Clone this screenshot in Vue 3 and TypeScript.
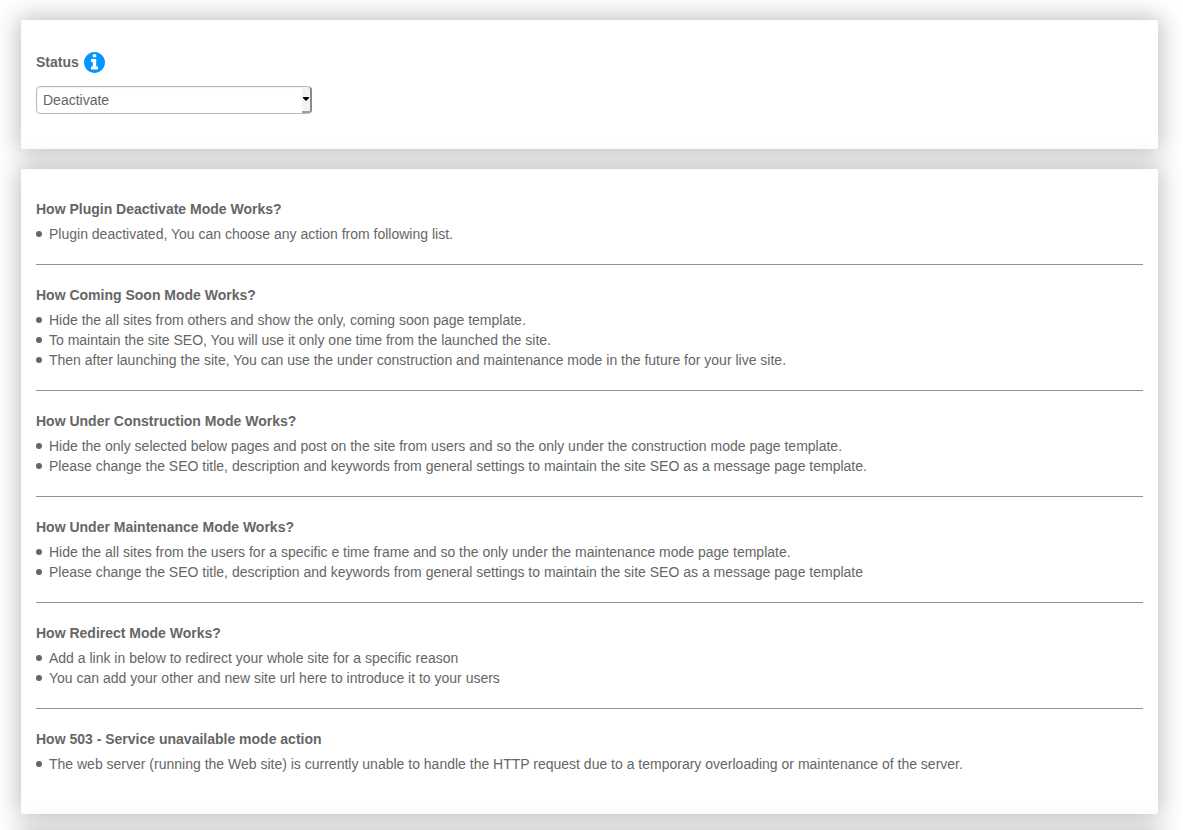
<script setup lang="ts">
import { ref } from 'vue'

interface Mode {
  title: string
  points: string[]
}

const status = ref('Deactivate')

const options: string[] = [
  'Deactivate',
  'Coming Soon',
  'Under Construction',
  'Under Maintenance',
  'Redirect',
  '503 - Service unavailable',
]

const modes: Mode[] = [
  {
    title: 'How Plugin Deactivate Mode Works?',
    points: ['Plugin deactivated, You can choose any action from following list.'],
  },
  {
    title: 'How Coming Soon Mode Works?',
    points: [
      'Hide the all sites from others and show the only, coming soon page template.',
      'To maintain the site SEO, You will use it only one time from the launched the site.',
      'Then after launching the site, You can use the under construction and maintenance mode in the future for your live site.',
    ],
  },
  {
    title: 'How Under Construction Mode Works?',
    points: [
      'Hide the only selected below pages and post on the site from users and so the only under the construction mode page template.',
      'Please change the SEO title, description and keywords from general settings to maintain the site SEO as a message page template.',
    ],
  },
  {
    title: 'How Under Maintenance Mode Works?',
    points: [
      'Hide the all sites from the users for a specific e time frame and so the only under the maintenance mode page template.',
      'Please change the SEO title, description and keywords from general settings to maintain the site SEO as a message page template',
    ],
  },
  {
    title: 'How Redirect Mode Works?',
    points: [
      'Add a link in below to redirect your whole site for a specific reason',
      'You can add your other and new site url here to introduce it to your users',
    ],
  },
  {
    title: 'How 503 - Service unavailable mode action',
    points: [
      'The web server (running the Web site) is currently unable to handle the HTTP request due to a temporary overloading or maintenance of the server.',
    ],
  },
]
</script>

<template>
  <main class="page">
    <section class="card">
      <div class="label-row">
        <label for="status">Status</label>
        <svg class="info" viewBox="0 0 1536 1536" aria-hidden="true">
          <path
            d="M1024 1248v-160q0-14-9-23t-23-9h-96V544q0-14-9-23t-23-9H544q-14 0-23 9t-9 23v160q0 14 9 23t23 9h96v320h-96q-14 0-23 9t-9 23v160q0 14 9 23t23 9h448q14 0 23-9t9-23zM896 352V192q0-14-9-23t-23-9H672q-14 0-23 9t-9 23v160q0 14 9 23t23 9h192q14 0 23-9t9-23zm640 416q0 209-103 385.500T1153.500 1433 768 1536t-385.500-103T103 1153.500 0 768t103-385.500T382.500 103 768 0t385.500 103T1433 382.500 1536 768z"
          />
        </svg>
      </div>
      <div class="select-wrap">
        <select id="status" v-model="status">
          <option v-for="option in options" :key="option">{{ option }}</option>
        </select>
        <span class="drop" aria-hidden="true">
          <svg viewBox="0 0 6 4"><path d="M0 0h6v1L3 4 0 1z" /></svg>
        </span>
      </div>
    </section>

    <section class="card">
      <article v-for="mode in modes" :key="mode.title" class="mode">
        <h2>{{ mode.title }}</h2>
        <ul>
          <li v-for="point in mode.points" :key="point">{{ point }}</li>
        </ul>
      </article>
    </section>
  </main>
</template>

<style>
body {
  margin: 0;
  background: #fff;
}
</style>

<style scoped>
.page {
  display: flex;
  flex-direction: column;
  gap: 20px;
  overflow: hidden;
  padding: 20px 25px 0 21px;
  font-family: "Nimbus Sans", "Liberation Sans", Arial, sans-serif;
  font-size: 14px;
  line-height: 20px;
  color: #666;
}

.card,
.page::after {
  background: #fff;
  border-radius: 2px;
  box-shadow: 0 0 25px 3px rgba(0, 0, 0, 0.25);
}

.card {
  padding: 30px 15px 40px;
}

.card:first-child {
  padding-bottom: 35px;
}

/* Shade at the foot of the page, cast by an edge just past its end */
.page::after {
  content: "";
  height: 80px;
  margin-bottom: -84px;
}

.label-row {
  display: flex;
  align-items: flex-start;
  gap: 5px;
  padding-top: 2px;
  margin-bottom: 13px;
  font-weight: bold;
}

.info {
  width: 21px;
  height: 21px;
  fill: #0095ff;
}

.select-wrap {
  position: relative;
  width: calc(25% - 1px);
}

select {
  display: block;
  box-sizing: border-box;
  width: 100%;
  height: 28px;
  padding: 0 6px;
  appearance: none;
  border: 1px solid #bbb;
  border-radius: 4px;
  background: #fff;
  box-shadow: inset 0 1px 2px rgba(0, 0, 0, 0.07);
  font: inherit;
  color: #666;
}

.drop {
  position: absolute;
  top: 1px;
  right: 0;
  bottom: 1px;
  display: flex;
  align-items: center;
  box-sizing: border-box;
  width: 10px;
  padding-left: 1px;
  border-right: 2px solid #8a8a8a;
  border-bottom: 2px solid #a0a0a0;
  border-radius: 0 3px 3px 0;
  background: #f3f3f3;
  pointer-events: none;
}

.drop svg {
  width: 6px;
  height: 4px;
  fill: #000;
}

.mode + .mode {
  margin-top: 20px;
  padding-top: 20px;
  border-top: 1px solid #919191;
}

h2 {
  margin: 0 0 5px;
  font-size: 14px;
  line-height: 20px;
  font-weight: bold;
}

ul {
  margin: 0;
  padding: 0;
  list-style: none;
}

li {
  display: flex;
  align-items: center;
  gap: 7px;
}

li::before {
  content: "";
  flex: none;
  width: 6px;
  height: 6px;
  border-radius: 50%;
  background: #666;
}
</style>
